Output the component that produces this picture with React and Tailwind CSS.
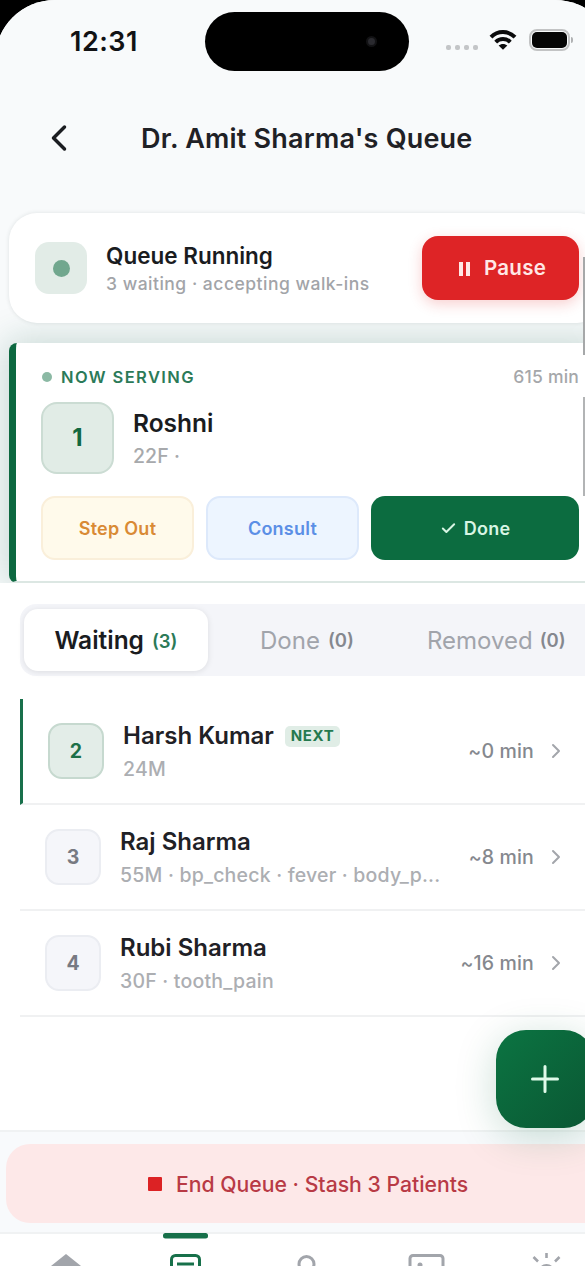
import { LuChevronLeft, LuChevronRight, LuCheck } from "react-icons/lu";

const patients = [
  { token: 2, name: "Harsh Kumar", info: "24M", wait: "~0 min", next: true },
  {
    token: 3,
    name: "Raj Sharma",
    info: "55M · bp_check · fever · body_p...",
    wait: "~8 min",
  },
  { token: 4, name: "Rubi Sharma", info: "30F · tooth_pain", wait: "~16 min" },
];

const StatusBar = () => {
  return (
    <div className="flex h-[84px] items-start">
      <span className="ml-[70px] mt-[24px] w-[135px] text-[27px] leading-9 font-semibold tracking-[0.5px] text-[#111214]">
        12:31
      </span>
      <div className="mt-[12px] flex h-[59px] w-[204px] items-center justify-end rounded-full bg-black pr-[32px]">
        <span className="h-[11px] w-[11px] rounded-full border-2 border-[#121214] bg-[#2a2a2f]" />
      </div>
      <div className="ml-[37px] mt-[45px] flex gap-[4px]">
        <span className="h-[5px] w-[5px] rounded-[2px] bg-[#c3c5c7]" />
        <span className="h-[5px] w-[5px] rounded-[2px] bg-[#c3c5c7]" />
        <span className="h-[5px] w-[5px] rounded-[2px] bg-[#c3c5c7]" />
        <span className="h-[5px] w-[5px] rounded-[2px] bg-[#c3c5c7]" />
      </div>
      <svg
        className="ml-[11px] mt-[29px] h-[22px] w-[28px]"
        viewBox="0 0 28 22"
        fill="none"
        stroke="#0b0b0c"
        strokeWidth="4"
      >
        <path d="M2 8.2C8.6 1.4 19.4 1.4 26 8.2" />
        <path d="M6.7 13.1C10.7 9.1 17.3 9.1 21.3 13.1" />
        <path
          d="M14 20.8L9.6 16.6C12.2 14.3 15.8 14.3 18.4 16.6Z"
          fill="#0b0b0c"
          stroke="none"
        />
      </svg>
      <div className="ml-[12px] mt-[29px] flex items-center">
        <div className="h-[22px] w-[41px] rounded-[8px] border-2 border-[#c2c3c4] p-[1px]">
          <div className="h-full w-full rounded-[5px] bg-[#050505]" />
        </div>
        <span className="ml-[1px] h-[6px] w-[2px] rounded-r bg-[#b0b1b3]" />
      </div>
    </div>
  );
};

const Header = () => {
  return (
    <div className="flex h-[129px] items-start pt-[37px]">
      <LuChevronLeft
        className="ml-[37px] mt-[-5px] h-[44px] w-[44px] text-[#1b1d21]"
        strokeWidth={1.9}
      />
      <h1 className="ml-[60px] pt-[1px] text-[27px] leading-[34px] font-semibold tracking-[0.2px] whitespace-nowrap text-[#1f2126]">
        Dr. Amit Sharma's Queue
      </h1>
    </div>
  );
};

const QueueStatus = () => {
  return (
    <div className="relative z-10 mr-[-20px] ml-[9px] flex h-[110px] items-center rounded-[28px] bg-white pr-[26px] pl-[26px] shadow-[0_0_4px_rgba(30,50,50,0.12)]">
      <div className="flex h-[52px] w-[52px] items-center justify-center rounded-[14px] bg-[#e2ece7]">
        <span className="h-[17px] w-[17px] rounded-full bg-[#71a78e]" />
      </div>
      <div className="ml-[19px] flex-1 pt-[2px] whitespace-nowrap">
        <p className="text-[22.5px] leading-[30px] font-semibold text-[#1a1c1f]">
          Queue Running
        </p>
        <p className="text-[17.5px] leading-[26px] font-medium tracking-[0.5px] text-[#a2a4a8]">
          3 waiting · accepting walk-ins
        </p>
      </div>
      <button className="flex h-[64px] w-[157px] items-center justify-center rounded-[16px] bg-[#de2426] pt-[1px] pl-[4px] text-[20.5px] font-semibold tracking-[0.3px] text-[#ffe8e6] shadow-[0_4px_14px_rgba(222,36,38,0.22)]">
        <span className="flex gap-[3px]">
          <span className="h-[14px] w-[4px] bg-[#ffe8e6]" />
          <span className="h-[14px] w-[4px] bg-[#ffe8e6]" />
        </span>
        <span className="ml-[14px]">Pause</span>
      </button>
    </div>
  );
};

const NowServing = () => {
  return (
    <div className="mt-[20px] mr-[-20px] ml-[9px] h-[240px] rounded-[8px] border-b-2 border-l-[7px] border-[#dce7e3] border-l-[#0d6840] bg-white pr-[26px] pl-[25px] shadow-[0_0_36px_4px_rgba(13,90,64,0.2)]">
      <div className="flex items-center justify-between pt-[21px] leading-[26px]">
        <div className="flex items-center">
          <span className="ml-[1px] h-[10px] w-[10px] rounded-full bg-[#8bb9a4]" />
          <span className="ml-[9px] text-[16.5px] font-semibold tracking-[1.4px] text-[#2b7a58]">
            NOW SERVING
          </span>
        </div>
        <span className="text-[17.5px] font-medium tracking-[0.2px] text-[#a5a7aa]">
          615 min
        </span>
      </div>
      <div className="mt-[12px] flex items-center">
        <div className="flex h-[72px] w-[73px] items-center justify-center rounded-[16px] border-2 border-[#cbdcd3] bg-[#e1ece6] text-[24px] font-bold text-[#12683f]">
          1
        </div>
        <div className="ml-[19px] pt-[2px]">
          <p className="text-[24.5px] leading-[34px] font-semibold text-[#1a1c1f]">
            Roshni
          </p>
          <p className="text-[19.5px] leading-[32px] font-medium tracking-[0.1px] text-[#a7a9ac]">
            22F ·
          </p>
        </div>
      </div>
      <div className="mt-[22px] flex gap-[12px] text-[18px] font-semibold tracking-[0.25px]">
        <button className="h-[64px] w-[153px] rounded-[14px] border-2 border-[#faefda] bg-[#fffaeb] text-[#d98a35]">
          Step Out
        </button>
        <button className="h-[64px] w-[153px] rounded-[14px] border-2 border-[#dde9fb] bg-[#edf5ff] text-[#5b8fe6]">
          Consult
        </button>
        <button className="flex h-[64px] flex-1 items-center justify-center rounded-[14px] bg-[#0c6c40] text-[#d8f5e4]">
          <LuCheck className="mr-[7px] h-[17px] w-[17px]" strokeWidth={2.8} />
          Done
        </button>
      </div>
    </div>
  );
};

const Tabs = () => {
  return (
    <div className="mt-[21px] mr-[-20px] ml-[20px] flex h-[72px] items-center rounded-[16px] bg-[#f4f5f9] p-[4px] whitespace-nowrap">
      <div className="flex h-[62px] w-[184px] items-center justify-center rounded-[14px] bg-white pt-[1px] shadow-[0_1px_6px_rgba(0,0,0,0.1)]">
        <span className="text-[24.5px] font-semibold text-[#1a1c1f]">
          Waiting
        </span>
        <span className="ml-[8px] pt-[2px] text-[18.5px] font-semibold text-[#2b7a58]">
          (3)
        </span>
      </div>
      <div className="ml-[52px] flex items-center pt-[1px]">
        <span className="text-[24px] text-[#a1a4ab]">Done</span>
        <span className="ml-[8px] pt-[1px] text-[18.5px] font-semibold text-[#85888f]">
          (0)
        </span>
      </div>
      <div className="ml-[73px] flex items-center pt-[1px]">
        <span className="text-[24px] text-[#a1a4ab]">Removed</span>
        <span className="ml-[7px] pt-[1px] text-[18.5px] font-semibold text-[#85888f]">
          (0)
        </span>
      </div>
    </div>
  );
};

const PatientRow = ({ patient }) => {
  return (
    <div
      className={`flex h-[106px] items-center border-b-2 border-[#f0f1f2] pr-[17px] whitespace-nowrap ${
        patient.next ? "border-l-[3px] border-l-[#18704b] pl-[25px]" : "pl-[25px]"
      }`}
    >
      <div
        className={`flex h-[56px] w-[56px] shrink-0 items-center justify-center rounded-[14px] border-2 pt-[1px] text-[19.5px] font-bold ${
          patient.next
            ? "border-[#c6d9cf] bg-[#e3ede8] text-[#1d7048]"
            : "border-[#ebedf2] bg-[#f5f6fa] text-[#777a82]"
        }`}
      >
        {patient.token}
      </div>
      <div className="ml-[19px] flex-1 pt-[2px]">
        <div className="flex items-center">
          <p className="text-[24px] leading-[34px] font-semibold text-[#1f2126]">
            {patient.name}
          </p>
          {patient.next && (
            <span className="ml-[11px] flex h-[21px] items-center rounded-[5px] bg-[#e0ede6] px-[6px] text-[15px] font-bold tracking-[0.6px] text-[#24794f]">
              NEXT
            </span>
          )}
        </div>
        <p className="text-[19.5px] leading-[32px] font-medium tracking-[0.2px] text-[#acaeb2]">
          {patient.info}
        </p>
      </div>
      <span className="pt-[1px] text-[19.5px] font-medium tracking-[0.15px] text-[#85888e]">
        {patient.wait}
      </span>
      <LuChevronRight
        className="ml-[10px] h-[24px] w-[24px] text-[#a3a6ab]"
        strokeWidth={2}
      />
    </div>
  );
};

const EndQueue = () => {
  return (
    <div className="mr-[-30px] h-[104px] border-y-2 border-[#f0f2f3] bg-[#f8fafc] pt-[12px] pl-[6px]">
      <button className="flex h-[79px] w-full items-center rounded-[24px] bg-[#fde8e8] text-[21.2px] font-medium whitespace-nowrap text-[#b83a45]">
        <span className="ml-[142px] h-[14px] w-[14px] rounded-[1px] bg-[#dc2224]" />
        <span className="ml-[14px] pt-[2px]">End Queue · Stash 3 Patients</span>
      </button>
    </div>
  );
};

const BottomNav = () => {
  return (
    <div className="relative h-[32px] bg-white">
      <svg
        className="h-[32px] w-[585px] overflow-visible"
        viewBox="0 0 585 32"
        fill="none"
        strokeWidth="3"
        stroke="#a2a5ab"
      >
        <path d="M66 20L51 32H81Z" fill="#a2a5ab" stroke="none" />
        <rect x="163" y="-1" width="45" height="5.5" rx="2.5" fill="#17704a" stroke="none" />
        <rect x="171.5" y="21.5" width="28" height="28" rx="4" stroke="#17704a" />
        <path d="M177 30H194" stroke="#17704a" />
        <circle cx="306.5" cy="30" r="7.5" />
        <rect x="410" y="21.5" width="33" height="28" rx="3" />
        <circle cx="420" cy="31" r="2.5" fill="#a2a5ab" stroke="none" />
        <path d="M546.5 19V24M533.5 23L538 27.5M559.5 23L555 27.5" strokeWidth="2.6" />
        <circle cx="546.5" cy="38.5" r="7" />
      </svg>
    </div>
  );
};

export default function App() {
  return (
    <div
      className="relative h-[1266px] w-[585px] overflow-hidden bg-black"
      style={{ fontFamily: "Inter, sans-serif" }}
    >
      <div className="ml-[-5px] h-full w-[620px] overflow-hidden rounded-t-[60px] bg-white pr-[30px] pl-[5px]">
        <div className="ml-[-5px] mr-[-30px] h-[583px] overflow-hidden bg-[#f8fafb] pr-[30px] pl-[5px]">
          <StatusBar />
          <Header />
          <QueueStatus />
          <NowServing />
        </div>
        <Tabs />
        <div className="mt-[23px] ml-[20px] h-[431px]">
          {patients.map((patient) => (
            <PatientRow key={patient.token} patient={patient} />
          ))}
        </div>
        <EndQueue />
        <BottomNav />
      </div>

      <button className="absolute top-[1030px] left-[496px] flex h-[98px] w-[98px] items-center justify-center rounded-[30px] bg-linear-to-br from-[#0b7442] to-[#0a5733] shadow-[0_8px_40px_rgba(13,104,64,0.22)]">
        <svg className="h-[30px] w-[30px]" viewBox="0 0 30 30" stroke="#e0fbea" strokeWidth="3" strokeLinecap="round">
          <path d="M15 2.5V27.5M2.5 15H27.5" />
        </svg>
      </button>

      <span className="absolute top-[257px] right-0 z-20 h-[98px] w-[2px] bg-[#a6a8a9]" />
      <span className="absolute top-[397px] right-0 z-20 h-[99px] w-[2px] bg-[#b2b4b5]" />
    </div>
  );
}
